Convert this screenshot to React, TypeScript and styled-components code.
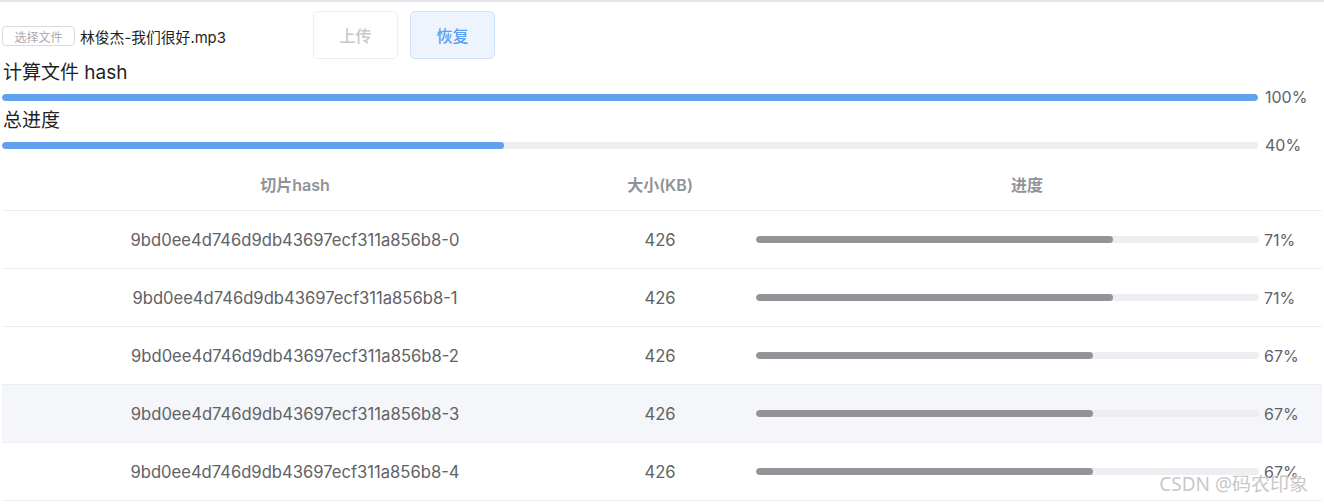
import React from 'react';
import styled, { createGlobalStyle } from 'styled-components';

type Chunk = {
	hash: string;
	size: number;
	percent: number;
};

const FILE_HASH = '9bd0ee4d746d9db43697ecf311a856b8';

const chunks: Chunk[] = [
	{ hash: `${FILE_HASH}-0`, size: 426, percent: 71 },
	{ hash: `${FILE_HASH}-1`, size: 426, percent: 71 },
	{ hash: `${FILE_HASH}-2`, size: 426, percent: 67 },
	{ hash: `${FILE_HASH}-3`, size: 426, percent: 67 },
	{ hash: `${FILE_HASH}-4`, size: 426, percent: 67 },
];

const HOVER_ROW = 3;

const App: React.FC = () => {
	return (
		<>
			<GlobalStyle />
			<Page>
				<Toolbar>
					<FilePicker>
						<ChooseButton>选择文件</ChooseButton>
						<FileName>林俊杰-我们很好.mp3</FileName>
					</FilePicker>
					<ActionButton disabled>上传</ActionButton>
					<ActionButton $primary>恢复</ActionButton>
				</Toolbar>

				<SectionTitle>计算文件 hash</SectionTitle>
				<ProgressLine>
					<Track $height={7}>
						<Fill $color='#62a0f0' style={{ width: '100%' }} />
					</Track>
					<Percent>100%</Percent>
				</ProgressLine>

				<SectionTitle>总进度</SectionTitle>
				<ProgressLine>
					<Track $height={7}>
						<Fill $color='#62a0f0' style={{ width: '40%' }} />
					</Track>
					<Percent>40%</Percent>
				</ProgressLine>

				<Table>
					<HeaderRow>
						<HeadCell>切片hash</HeadCell>
						<HeadCell>大小(KB)</HeadCell>
						<HeadCell>进度</HeadCell>
					</HeaderRow>
					{chunks.map((chunk, i) => (
						<BodyRow key={chunk.hash} $hover={i === HOVER_ROW}>
							<Cell>{chunk.hash}</Cell>
							<Cell>{chunk.size}</Cell>
							<ProgressCell>
								<Track $height={7}>
									<Fill $color='#939398' style={{ width: `${chunk.percent}%` }} />
								</Track>
								<CellPercent>{chunk.percent}%</CellPercent>
							</ProgressCell>
						</BodyRow>
					))}
				</Table>

				<Watermark>CSDN @码农印象</Watermark>
			</Page>
		</>
	);
};

const GlobalStyle = createGlobalStyle`
	body {
		margin: 0;
		background: #fff;
		font-family: Inter, 'Noto Sans CJK SC', sans-serif;
	}
`;

const Page = styled.div`
	position: relative;
	width: 1324px;
	height: 504px;
	overflow: hidden;
	border-top: 2px solid #e4e4ea;
	box-sizing: border-box;
`;

const Toolbar = styled.div`
	display: flex;
	align-items: center;
	height: 48px;
	padding: 9px 0 0 2px;
	margin-bottom: 3px;
`;

const FilePicker = styled.div`
	display: flex;
	align-items: center;
	gap: 5px;
	width: 299px;
	padding-top: 2px;
`;

const ChooseButton = styled.span`
	display: flex;
	align-items: center;
	justify-content: center;
	width: 73px;
	height: 20px;
	box-sizing: border-box;
	border: 1px solid #d9d9de;
	border-radius: 4px;
	font-size: 12px;
	color: #aaaab0;
	font-family: 'Noto Sans CJK SC', sans-serif;
`;

const FileName = styled.span`
	font-size: 14.8px;
	color: #1f1f1f;
	font-family: Inter, 'Noto Sans CJK SC', sans-serif;
`;

const ActionButton = styled.button<{ $primary?: boolean }>`
	width: 85px;
	height: 48px;
	margin-left: 12px;
	border-radius: 5px;
	font-size: 16px;
	font-weight: 500;
	font-family: 'Noto Sans CJK SC', sans-serif;
	border: 1px solid ${(p) => (p.$primary ? '#cfe2fb' : '#ebeef5')};
	background: ${(p) => (p.$primary ? '#edf4fe' : '#ffffff')};
	color: ${(p) => (p.$primary ? '#5c9cf2' : '#c4c7cd')};
	cursor: pointer;
	&:disabled {
		cursor: not-allowed;
	}
`;

const SectionTitle = styled.div`
	height: 22px;
	line-height: 22px;
	padding-left: 3px;
	font-size: 19px;
	color: #1f1f1f;
`;

const ProgressLine = styled.div`
	display: flex;
	align-items: center;
	height: 26px;
	padding: 0 2px;
`;

const Track = styled.div<{ $height: number }>`
	flex: 1;
	height: ${(p) => p.$height}px;
	border-radius: ${(p) => p.$height}px;
	background: #ededf2;
	overflow: hidden;
`;

const Fill = styled.div<{ $color: string }>`
	height: 100%;
	border-radius: inherit;
	background: ${(p) => p.$color};
`;

const Percent = styled.span`
	width: 57px;
	margin-left: 7px;
	font-size: 16px;
	color: #606266;
`;

const Table = styled.div`
	width: 1320px;
	margin-left: 2px;
	font-size: 16.6px;
	color: #606266;
`;

const HeaderRow = styled.div`
	display: grid;
	grid-template-columns: 586px 144px 1fr;
	height: 52px;
	border-bottom: 1px solid #ebeef5;
`;

const HeadCell = styled.div`
	display: flex;
	align-items: center;
	justify-content: center;
	font-size: 16px;
	font-weight: 600;
	color: #909399;
`;

const BodyRow = styled.div<{ $hover?: boolean }>`
	display: grid;
	grid-template-columns: 586px 144px 1fr;
	height: 57px;
	border-bottom: 1px solid #ebeef5;
	background: ${(p) => (p.$hover ? '#f5f6fa' : '#fff')};
`;

const Cell = styled.div`
	display: flex;
	align-items: center;
	justify-content: center;
`;

const ProgressCell = styled.div`
	display: flex;
	align-items: center;
	padding: 0 12px 0 24px;
`;

const CellPercent = styled.span`
	width: 46px;
	margin-left: 5px;
	font-size: 16px;
	color: #606266;
`;

const Watermark = styled.div`
	position: absolute;
	right: 16px;
	bottom: 7px;
	font-size: 19px;
	color: #c8c8c8;
	font-family: 'Noto Sans', 'Noto Sans CJK SC', sans-serif;
	text-shadow: 0 0 1px #fff;
`;

export default App;
